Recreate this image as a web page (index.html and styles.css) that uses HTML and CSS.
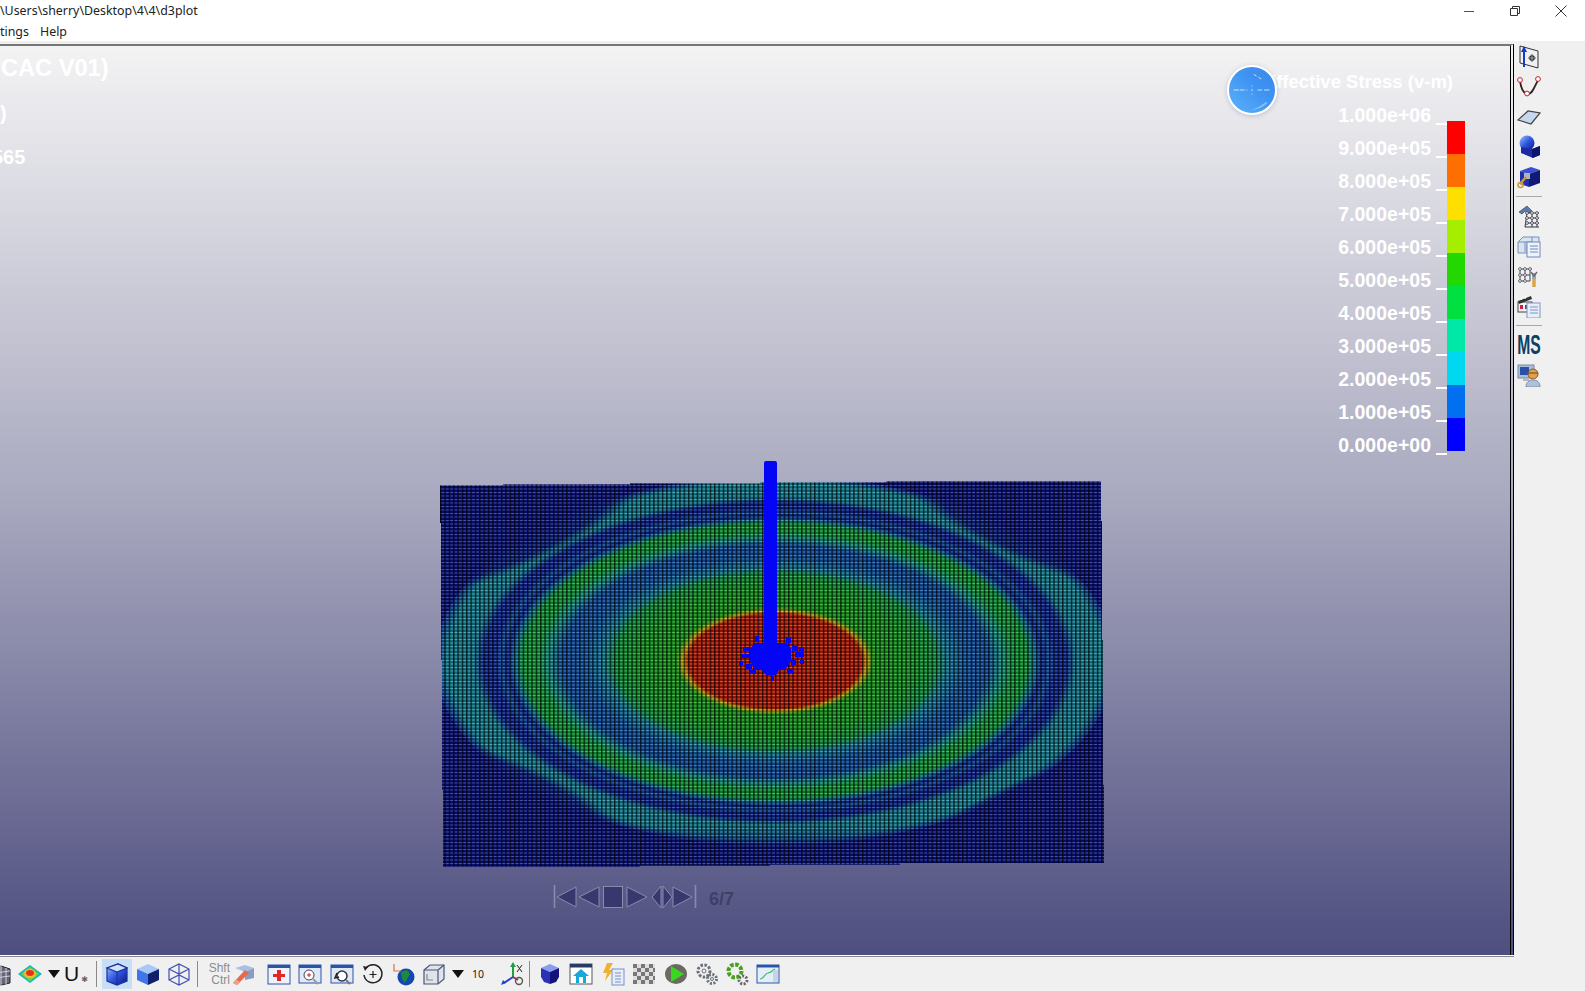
FILE: index.html
```html
<!DOCTYPE html>
<html lang="en">
<head>
<meta charset="utf-8">
<title>d3plot</title>
<link rel="stylesheet" href="styles.css">
</head>
<body>
<div class="window">
  <header class="titlebar">
    <span class="title-text">\Users\sherry\Desktop\4\4\d3plot</span>
    <div class="winbtns">
      <svg class="winbtn" viewBox="0 0 12 12"><path d="M1 6.500h10" stroke="#555" stroke-width="1"/></svg>
      <svg class="winbtn" viewBox="0 0 12 12"><path d="M1.500 3.500h7v7h-7zM3.500 3.500v-2h7v7h-2" fill="none" stroke="#333" stroke-width="1"/></svg>
      <svg class="winbtn" viewBox="0 0 12 12"><path d="M.5.5l11 11M11.500.5l-11 11" stroke="#333" stroke-width="1"/></svg>
    </div>
  </header>
  <nav class="menubar"><span class="menu-a">tings</span><span class="menu-b">Help</span></nav>
  <div class="workspace">
    <div class="leftcol">
      <main class="viewport">
        <svg class="stage" viewBox="0 46 1510 909" aria-hidden="true">
          <defs>
            <radialGradient id="fringe" gradientUnits="userSpaceOnUse" cx="0" cy="0" r="1" gradientTransform="translate(775 661) scale(340 185)">
              <stop offset="0" stop-color="#cc1a00"/>
              <stop offset=".255" stop-color="#cc1a00"/>
              <stop offset=".27" stop-color="#d8b000"/>
              <stop offset=".29" stop-color="#18a818"/>
              <stop offset=".40" stop-color="#10a820"/>
              <stop offset=".47" stop-color="#0ca040"/>
              <stop offset=".505" stop-color="#1088a8"/>
              <stop offset=".56" stop-color="#0a58b0"/>
              <stop offset=".625" stop-color="#0a50b0"/>
              <stop offset=".665" stop-color="#10a090"/>
              <stop offset=".70" stop-color="#0ca838"/>
              <stop offset=".74" stop-color="#0ca838"/>
              <stop offset=".765" stop-color="#0a78a8"/>
              <stop offset=".785" stop-color="#0824a4"/>
              <stop offset=".805" stop-color="#0a50a8"/>
              <stop offset=".825" stop-color="#0824a4"/>
              <stop offset=".855" stop-color="#0824a4"/>
              <stop offset=".885" stop-color="#1088a0"/>
              <stop offset=".965" stop-color="#1090a4"/>
              <stop offset="1" stop-color="#0a30a4"/>
              <stop offset="1.03" stop-color="#0a30a4"/>
              <stop offset="1.08" stop-color="#10809c"/>
              <stop offset="1.14" stop-color="#0e709c"/>
              <stop offset="1.22" stop-color="#061490"/>
              <stop offset="1.6" stop-color="#06108c"/>
            </radialGradient>
            <linearGradient id="bottomfade" x1="0" y1="0" x2="0" y2="1">
              <stop offset="0" stop-color="#06128e" stop-opacity="0"/>
              <stop offset=".6" stop-color="#06128e" stop-opacity="1"/>
              <stop offset="1" stop-color="#06128e" stop-opacity="1"/>
            </linearGradient>
            <radialGradient id="lobe">
              <stop offset="0" stop-color="#06128e" stop-opacity="1"/>
              <stop offset=".7" stop-color="#06128e" stop-opacity=".85"/>
              <stop offset="1" stop-color="#06128e" stop-opacity="0"/>
            </radialGradient>
            <pattern id="mesh" patternUnits="userSpaceOnUse" width="4.35" height="3.5" x="440" y="485">
              <rect x="0" y="0" width="4.35" height="1" fill="#fff" opacity=".28"/>
              <rect x="0" y="1" width="4.35" height="2.5" fill="#000" opacity=".28"/>
              <rect x="0" y="0" width="1.4" height="3.5" fill="#000" opacity=".75"/>
            </pattern>
            <clipPath id="plateclip">
              <path d="M440 485.500H503V484.500H630V483.500H760V482.500H886V481.500H1101V521H1102V640H1103V785H1104V863H900V864.500H770V865.500H640V866.500H443V790H442V660H441V523H440Z"/>
            </clipPath>
            <linearGradient id="bl" x1="0" y1="0" x2="1" y2="1">
              <stop offset="0" stop-color="#9cc4ff"/>
              <stop offset=".5" stop-color="#2f55e0"/>
              <stop offset="1" stop-color="#0a1680"/>
            </linearGradient>
          </defs>
          <g clip-path="url(#plateclip)">
            <rect x="436" y="478" width="672" height="392" fill="url(#fringe)"/>
            <ellipse cx="530" cy="535" rx="125" ry="26" transform="rotate(-26 530 535)" fill="url(#lobe)"/>
            <ellipse cx="1015" cy="530" rx="120" ry="26" transform="rotate(25 1015 530)" fill="url(#lobe)"/>
            <ellipse cx="520" cy="790" rx="120" ry="26" transform="rotate(25 520 790)" fill="url(#lobe)"/>
            <ellipse cx="1020" cy="805" rx="115" ry="24" transform="rotate(-25 1020 805)" fill="url(#lobe)"/>
            <rect x="436" y="826" width="672" height="44" fill="url(#bottomfade)"/>
            <rect x="436" y="478" width="672" height="392" fill="url(#mesh)"/>
          </g>
          <g fill="#0505f5">
            <rect x="764" y="461" width="13" height="190" rx="2"/>
            <path d="M755 643h32l4 6v12l-6 9h-6l-3 5h-10l-4-5h-7l-5-9v-12z"/>
            <path d="M743 647h6v4h-6zM741 654h8v4h-8zM746 664h6v5h-6zM750 670h6v4h-6zM755 636h4v6h-4zM786 637h5v6h-5zM792 646h5v5h-5zM795 652h9v5h-9zM791 660h5v5h-5zM799 647h5v4h-5zM787 669h6v4h-6zM771 676h3v5h-3zM739 661h4v4h-4zM800 660h4v4h-4z"/>
          </g>
        </svg>

        <div class="model-title">CAC V01)</div>
        <div class="model-line-a">)</div>
        <div class="model-line-b">565</div>

        <div class="legend-title">Effective Stress (v-m)</div>
        <div class="orb">
          <svg class="orb-marks" viewBox="0 0 50 50"><path d="M5 25h6M12 25h5M19 25h1M31 25h5M38 25h6M25 20v1M25 24v2M25 29v1M27 8l3 2M32 11l3 2" stroke="#fff" stroke-width="1" opacity=".8"/><path d="M24 47c6-1 13-3 18-8l-2-1c-5 4-10 7-16 9z" fill="#fff" opacity=".35"/></svg>
        </div>

        <div class="legend">
          <div class="legend-labels">
            <div class="legend-row"><span>1.000e+06</span><i class="tick"></i></div>
            <div class="legend-row"><span>9.000e+05</span><i class="tick"></i></div>
            <div class="legend-row"><span>8.000e+05</span><i class="tick"></i></div>
            <div class="legend-row"><span>7.000e+05</span><i class="tick"></i></div>
            <div class="legend-row"><span>6.000e+05</span><i class="tick"></i></div>
            <div class="legend-row"><span>5.000e+05</span><i class="tick"></i></div>
            <div class="legend-row"><span>4.000e+05</span><i class="tick"></i></div>
            <div class="legend-row"><span>3.000e+05</span><i class="tick"></i></div>
            <div class="legend-row"><span>2.000e+05</span><i class="tick"></i></div>
            <div class="legend-row"><span>1.000e+05</span><i class="tick"></i></div>
            <div class="legend-row"><span>0.000e+00</span><i class="tick"></i></div>
          </div>
          <div class="legend-bar">
            <i class="c1"></i><i class="c2"></i><i class="c3"></i><i class="c4"></i><i class="c5"></i><i class="c6"></i><i class="c7"></i><i class="c8"></i><i class="c9"></i><i class="c10"></i>
          </div>
        </div>

        <div class="player">
          <svg class="player-icons" viewBox="0 0 146 26" aria-hidden="true">
            <g fill="#38386f" stroke="#8a8aad" stroke-width="1">
              <path d="M1.500 1v23" fill="none" stroke-width="1.600"/>
              <path d="M4 13L23 3v20z"/>
              <path d="M26 13L46 3v20z"/>
              <rect x="50.500" y="2.500" width="19" height="21"/>
              <path d="M74 3l20 10-20 10z"/>
              <path d="M99 13l9-11v22z"/>
              <path d="M110 2l9 11-9 11z"/>
              <path d="M120 3l19 10-19 10z"/>
              <path d="M142.500 1v23" fill="none" stroke-width="1.600"/>
            </g>
          </svg>
          <span class="player-count">6/7</span>
        </div>
      </main>

      <div class="bottombar">
        <svg class="ic cut" viewBox="0 0 24 24"><path d="M8 4l9 3v14l-9 2-6-3V7z" fill="#667" stroke="#223"/><path d="M2 11l15-2M2 16l15-2M8 4v19M13 6v16" stroke="#cfd3da"/></svg>
        <svg class="ic g1" viewBox="0 0 24 24"><path d="M12 3l12 9-12 9L0 12z" fill="#18b8b8"/><path d="M12 5l9 7-9 7-9-7z" fill="#7ad040"/><ellipse cx="12" cy="11.500" rx="6" ry="4.500" fill="#f0c020"/><ellipse cx="12" cy="11" rx="4" ry="3" fill="#e83020"/></svg>
        <svg class="tri g6" viewBox="0 0 12 8"><path d="M0 0h12L6 8z" fill="#111"/></svg>
        <div class="u-btn g1">U<small>✱</small></div>
        <i class="vsep g11"></i>
        <div class="selected g5"><svg class="ic" viewBox="0 0 24 24"><path d="M2 6l11-4 9 4v13l-10 4-10-4z" fill="url(#bl)" stroke="#1a2f9a" stroke-width="1.200"/><path d="M2 6l10 4 10-4-9-4z" fill="#cfe0fa" stroke="#1a2f9a" stroke-width="1.200"/><path d="M12 10v13" stroke="#1a2f9a"/></svg></div>
        <svg class="ic g4" viewBox="0 0 24 24"><path d="M1 7l11-5 11 5-11 5z" fill="#a8c8f6"/><path d="M1 7l11 5v11L1 18z" fill="#3f75e8"/><path d="M12 12l11-5v11l-11 5z" fill="#10206a"/></svg>
        <svg class="ic g7" viewBox="0 0 24 24" fill="none" stroke="#3f4fb5" stroke-width="1.200"><path d="M2 7l10-5 10 5v11l-10 5-10-5zM2 7l10 5 10-5M12 12v11M12 2v11M2 18l10-5 10 5"/></svg>
        <i class="vsep g6"></i>
        <div class="shft g6"><span>Shft</span><span>Ctrl</span></div>
        <svg class="ic g2" viewBox="0 0 24 24"><path d="M3 6l10-3 9 3-9 4z" fill="#a8bfe8"/><path d="M13 10l9-4v10l-9 2z" fill="#8a9cc0"/><path d="M1 21l12-13 4 3-12 12z" fill="#e8684c"/><path d="M1 21l4 2 3-3-4-3z" fill="#f0a088"/></svg>
        <svg class="ic g11" viewBox="0 0 24 24"><rect x="1" y="3" width="22" height="19" fill="#eef3fb" stroke="#2a54a8"/><rect x="1" y="3" width="22" height="3" fill="#2a54a8"/><path d="M10 8h4v4h4v3h-4v4h-4v-4H6v-3h4z" fill="#e02828"/></svg>
        <svg class="ic g7" viewBox="0 0 24 24"><rect x="1" y="3" width="22" height="18" fill="#dfe8f5" stroke="#2a54a8"/><rect x="1" y="3" width="22" height="3" fill="#2a54a8"/><circle cx="11" cy="13" r="5" fill="#fff" stroke="#445"/><path d="M9 13h4M11 11v4" stroke="#d02020"/><path d="M15 17l5 5" stroke="#99a" stroke-width="2"/></svg>
        <svg class="ic g8" viewBox="0 0 24 24"><rect x="1" y="3" width="22" height="18" fill="#dfe8f5" stroke="#2a54a8"/><rect x="1" y="3" width="22" height="3" fill="#2a54a8"/><circle cx="12" cy="14" r="5" fill="#fff" stroke="#334" stroke-width="1.500"/><path d="M7 11l-2 5 4-1" fill="none" stroke="#222" stroke-width="1.500"/><path d="M16 18l4 4" stroke="#778" stroke-width="2"/></svg>
        <svg class="ic g6" viewBox="0 0 24 24"><path d="M6 6a9 9 0 1 1-2 7" fill="none" stroke="#222" stroke-width="1.500"/><path d="M3 4l5 1-3 4z" fill="#222"/><path d="M13 9v7M9.500 12.500h7" stroke="#222" stroke-width="1.200"/></svg>
        <svg class="ic g8" viewBox="0 0 24 24"><circle cx="14" cy="15" r="8.500" fill="#1248b0"/><path d="M9 10l6-2 3 4-3 5-2 4-3-4z" fill="#1c8a3a"/><path d="M2 2v7h7" fill="none" stroke="#d87050" stroke-width="1.200"/></svg>
        <svg class="ic g6" viewBox="0 0 24 24" fill="#dfe3ea" stroke="#4a5578" stroke-width="1.200"><path d="M2 8l6-5h14v14l-6 5H2z"/><path d="M2 8h14v14M16 8l6-5" fill="none"/><path d="M5 12v6h6" fill="none" stroke="#888"/></svg>
        <svg class="tri g6" viewBox="0 0 12 8"><path d="M0 0h12L6 8z" fill="#111"/></svg>
        <span class="num g4">10</span>
        <svg class="ic g13" viewBox="0 0 24 24"><path d="M12 15V3" stroke="#20a040" stroke-width="2"/><path d="M9 5l3-5 3 5z" fill="#20a040"/><path d="M12 15l-9 6" stroke="#2040d0" stroke-width="2"/><path d="M0 23l2-5 3 3z" fill="#2040d0"/><path d="M12 15l5 3" stroke="#d02020" stroke-width="2"/><circle cx="18" cy="19" r="3.500" fill="none" stroke="#555" stroke-width="1.400"/><path d="M16 3l5 7M21 3l-5 7" stroke="#222"/></svg>
        <i class="vsep g4"></i>
        <svg class="ic g8" viewBox="0 0 24 24"><path d="M3 6l9-4 9 4-9 4z" fill="#8a9cf0"/><path d="M3 6l9 4v12l-6-2-3-5z" fill="#2a30b8"/><path d="M12 10l9-4v9l-3 5-6 2z" fill="#12127a"/></svg>
        <svg class="ic g7" viewBox="0 0 24 24"><rect x="1" y="2" width="22" height="20" fill="#fff" stroke="#556"/><rect x="1" y="2" width="22" height="3.500" fill="#2a3a68"/><path d="M12 7l8 7h-3v7H7v-7H4z" fill="#18a8d8"/><rect x="10" y="15" width="4" height="6" fill="#fff"/></svg>
        <svg class="ic g8" viewBox="0 0 24 24"><path d="M6 1h6L8 8h4L4 19l2-8H2z" fill="#f0b030"/><rect x="11" y="7" width="12" height="16" fill="#e8eef8" stroke="#7a90c8"/><path d="M14 11h6M14 14h6M14 17h6M14 20h6" stroke="#7a90c8"/></svg>
        <svg class="ic g7" viewBox="0 0 24 24"><rect x="1" y="2" width="22" height="20" fill="#ddd"/><path d="M1 2h4v4H1zM9 2h4v4H9zM17 2h4v4h-4zM5 6h4v4H5zM13 6h4v4h-4zM21 6h2v4h-2zM1 10h4v4H1zM9 10h4v4H9zM17 10h4v4h-4zM5 14h4v4H5zM13 14h4v4h-4zM21 14h2v4h-2zM1 18h4v4H1zM9 18h4v4H9zM17 18h4v4h-4z" fill="#777"/></svg>
        <svg class="ic g8" viewBox="0 0 24 24"><ellipse cx="12" cy="12" rx="11" ry="10" fill="#6a6a60"/><path d="M7 4l13 8-13 8z" fill="#38d820"/></svg>
        <svg class="ic g7" viewBox="0 0 24 24" fill="none" stroke="#6a7078"><circle cx="9" cy="9" r="6" stroke-width="3" stroke-dasharray="2.500 1.500"/><circle cx="9" cy="9" r="2"/><circle cx="17" cy="17" r="4.500" stroke-width="3" stroke-dasharray="2 1.500"/><circle cx="17" cy="17" r="1.500"/></svg>
        <svg class="ic g6" viewBox="0 0 24 24" fill="none"><circle cx="10" cy="9" r="6.500" stroke="#4aa020" stroke-width="4" stroke-dasharray="3.500 1.500"/><circle cx="18" cy="18" r="4" stroke="#666" stroke-width="3" stroke-dasharray="2 1.500"/></svg>
        <svg class="ic g7" viewBox="0 0 24 24"><rect x="1" y="3" width="22" height="18" fill="#e4eef8" stroke="#2a54a8"/><rect x="1" y="3" width="22" height="2.500" fill="#2a54a8"/><path d="M4 17c4 0 5-6 8-6s3-2 7-4" fill="none" stroke="#38b868" stroke-width="1.200"/><rect x="17" y="8" width="5" height="12" fill="#c8d4e4"/></svg>
      </div>
    </div>

    <aside class="righttools">
      <svg class="ic" viewBox="0 0 24 24"><path d="M3 1l18 5v17L3 18z" fill="#eef0f4" stroke="#333"/><path d="M7 2v20" stroke="#1a3ac0" stroke-width="2"/><path d="M4 7l3-6 3 6z" fill="#1a3ac0"/><path d="M15 9l4 4-4 4-4-4z" fill="#333"/><path d="M15 9v8M11 13h8" stroke="#ddd" stroke-width=".6"/></svg>
      <svg class="ic" viewBox="0 0 24 24"><path d="M3 6c1 7 3 13 8 13s6-8 11-15" fill="none" stroke="#302020" stroke-width="1.800"/><circle cx="3" cy="5" r="2.400" fill="#fff" stroke="#c02030"/><circle cx="10" cy="18.500" r="2.400" fill="#fff" stroke="#c02030"/><circle cx="21" cy="4" r="2.400" fill="#fff" stroke="#c02030"/></svg>
      <svg class="ic" viewBox="0 0 24 24"><path d="M1 15L11 6l12 2-9 11z" fill="#c4d8f0" stroke="#444" stroke-width="1.200"/></svg>
      <svg class="ic" viewBox="0 0 24 24"><circle cx="10" cy="8" r="7.500" fill="url(#bl)"/><path d="M4 12l11 2 8-3v9l-7 3-12-5z" fill="#1c2aa8"/><path d="M15 14v9l8-3v-9z" fill="#0e146c"/></svg>
      <svg class="ic" viewBox="0 0 24 24"><path d="M3 6l11-4 9 3-11 4z" fill="#3a50d0"/><path d="M3 6l9 3v13l-9-3z" fill="#2030a8"/><path d="M12 9l11-4v13l-11 4z" fill="#101a78"/><rect x="7" y="8" width="6" height="6" fill="#b0b4b8"/><path d="M9 12l-6 7" stroke="#c89a38" stroke-width="2.500"/><circle cx="3.500" cy="20" r="2.500" fill="none" stroke="#c89a38" stroke-width="1.500"/></svg>
      <i class="hsep"></i>
      <svg class="ic" viewBox="0 0 24 24"><path d="M2 8l8-6 5 5-4 2-3-2-3 3z" fill="#5a7ab0" stroke="#333" stroke-width=".6"/><path d="M10 9h12M10 14h12M10 19h12M8 23h14M10 9l-2 14M15 9v14M20 9v14" stroke="#334" stroke-width="1"/><g fill="#fff" stroke="#334" stroke-width=".8"><circle cx="10" cy="9" r="1.400"/><circle cx="15" cy="9" r="1.400"/><circle cx="20" cy="9" r="1.400"/><circle cx="10" cy="14" r="1.400"/><circle cx="15" cy="14" r="1.400"/><circle cx="20" cy="14" r="1.400"/><circle cx="10" cy="19" r="1.400"/><circle cx="15" cy="19" r="1.400"/><circle cx="20" cy="19" r="1.400"/></g></svg>
      <svg class="ic" viewBox="0 0 24 24"><path d="M1 8l5-5h16v8H10v8H1z" fill="#d8e4f4" stroke="#7a8fb8"/><path d="M1 8h14M8 8v10M15 3v8" stroke="#7a8fb8"/><rect x="10" y="8" width="13" height="15" fill="#eef3fa" stroke="#6f88bc"/><path d="M13 12h8M13 15h8M13 18h8" stroke="#6f88bc"/></svg>
      <svg class="ic" viewBox="0 0 24 24"><path d="M3 5h12M3 11h10M3 17h10M3 5v12M8 5v12M13 5v12" stroke="#445" stroke-width="1"/><g fill="#fff" stroke="#445" stroke-width=".8"><circle cx="3" cy="5" r="1.400"/><circle cx="8" cy="5" r="1.400"/><circle cx="13" cy="5" r="1.400"/><circle cx="3" cy="11" r="1.400"/><circle cx="8" cy="11" r="1.400"/><circle cx="3" cy="17" r="1.400"/><circle cx="8" cy="17" r="1.400"/></g><path d="M17 9v6" stroke="#9aa" stroke-width="4"/><path d="M17 15v8" stroke="#d8a848" stroke-width="3.500"/><path d="M14 8l3 4 3-4" fill="none" stroke="#667" stroke-width="1.500"/></svg>
      <svg class="ic" viewBox="0 0 24 24"><rect x="1" y="8" width="14" height="10" fill="#f4f4f8" stroke="#444"/><path d="M1 7l13-5 1 3L2 10z" fill="#333"/><path d="M4 6l1-3M8 5l1-3" stroke="#fff"/><rect x="3" y="11" width="3" height="4" fill="#d02040"/><rect x="8" y="11" width="3" height="4" fill="#3050c0"/><rect x="10" y="9" width="13" height="15" fill="#e8eff8" stroke="#7f96c0"/><path d="M13 13h8M13 16h8M13 19h8" stroke="#7f96c0"/></svg>
      <i class="hsep"></i>
      <div class="ms">MS</div>
      <svg class="ic" viewBox="0 0 24 24"><rect x="1" y="2" width="16" height="13" fill="#a8bede" stroke="#7a8aa0"/><rect x="3" y="4" width="9" height="8" fill="#2a50a8"/><path d="M6 15h6v3H6z" fill="#b0b8c4"/><circle cx="16" cy="11" r="5" fill="#e0a050" stroke="#8a5a20"/><path d="M11 10h10" stroke="#6a4a20"/><path d="M9 24c0-5 3-7 7-7s7 2 7 7z" fill="#aec0da" stroke="#8090a8"/></svg>
    </aside>
  </div>
</div>
</body>
</html>
```

FILE: styles.css
```css
* { box-sizing: border-box; }
html, body { margin: 0; height: 100%; overflow: hidden; }
body { background: #f0f0f0; font-family: "Noto Sans", "Liberation Sans", sans-serif; color: #222; }

.window { display: flex; flex-direction: column; width: 1585px; height: 991px; overflow: hidden; }

.titlebar { display: flex; justify-content: space-between; align-items: center; height: 22px; background: #fff; flex: none; }
.title-text { font-size: 12.400px; line-height: 22px; }
.winbtns { display: flex; align-items: center; gap: 34px; padding-right: 18px; }
.winbtn { width: 12px; height: 12px; display: block; }

.menubar { height: 19px; background: #fff; font-size: 12.400px; line-height: 19px; flex: none; display: flex; }
.menu-a { width: 40px; }

.workspace { flex: 1; display: flex; min-height: 0; }
.leftcol { width: 1514px; flex: none; display: flex; flex-direction: column; padding-top: 3px; }

.viewport {
  position: relative; flex: none; height: 911px; overflow: hidden;
  border-top: 2px solid #777; border-right: 4px double #000;
  background: linear-gradient(to bottom, #f3f3f4 0%, #a8a8bf 50%, #4e4e80 100%);
}
.stage { position: absolute; left: 0; top: 0; width: 1510px; height: 909px; display: block; }

.model-title, .model-line-a, .model-line-b, .legend-title, .legend-labels, .player-count {
  font-family: "Liberation Sans", Arial, sans-serif; font-weight: 700;
}
.model-title, .model-line-a, .model-line-b, .legend-title { position: absolute; color: #fff; white-space: nowrap; }
.model-title { left: 1px; top: 8px; font-size: 23.600px; line-height: 28px; }
.model-line-a { left: 0; top: 55px; font-size: 20px; line-height: 24px; }
.model-line-b { left: -8px; top: 99px; font-size: 20px; line-height: 24px; }
.legend-title { right: 57px; top: 25px; font-size: 18.500px; line-height: 22px; }

.orb {
  position: absolute; left: 1227px; top: 19px; width: 50px; height: 50px; border-radius: 50%;
  border: 2px solid #fff; background: linear-gradient(45deg, #5cb2fc 0%, #3f93f2 60%, #3a88ee 100%);
  box-shadow: 0 1px 5px rgba(120, 130, 160, .4);
  overflow: hidden;
}
.orb-marks { width: 46px; height: 46px; display: block; }

.legend { position: absolute; right: 45px; top: 53px; display: flex; color: #fff; }
.legend-labels { display: flex; flex-direction: column; font-size: 19.500px; }
.legend-row { position: relative; height: 33px; width: 109px; display: flex; justify-content: flex-end; align-items: center; }
.legend-row span { line-height: 33px; margin-right: 16px; }
.tick { position: absolute; right: 0; bottom: 7px; width: 11px; height: 2px; background: #fff; }
.legend-bar { width: 18px; margin-top: 22px; display: flex; flex-direction: column; }
.legend-bar i { display: block; height: 33px; }
.c1 { background: #ff0000; }
.c2 { background: #ff6e00; }
.c3 { background: #ffdf00; }
.c4 { background: #a6ee00; }
.c5 { background: #22d800; }
.c6 { background: #00e040; }
.c7 { background: #00e8a8; }
.c8 { background: #00d8f0; }
.c9 { background: #0070f0; }
.c10 { background: #0000ff; }

.player { position: absolute; left: 553px; top: 838px; display: flex; align-items: center; gap: 10px; height: 26px; }
.player-icons { width: 146px; height: 26px; display: block; }
.player-count { font-size: 18px; color: #3f3f66; line-height: 26px; padding-top: 4px; }

.bottombar {
  flex: 1; display: flex; align-items: center; background: #f0f0f0;
  border-top: 1px solid #fff; box-shadow: inset 0 1px 0 #888;
  padding: 3px 0 2px; border-bottom: 1px solid #b8b8b8;
}
.ic { width: 24px; height: 24px; display: block; flex: none; }
.cut { margin-left: -7px; }
.tri { width: 12px; height: 8px; flex: none; }
.g1 { margin-left: 1px; }
.g2 { margin-left: 2px; }
.g4 { margin-left: 4px; }
.g5 { margin-left: 5px; }
.g6 { margin-left: 6px; }
.g7 { margin-left: 7px; }
.g8 { margin-left: 8px; }
.g11 { margin-left: 11px; }
.g13 { margin-left: 13px; }

.u-btn { width: 24px; font-family: "Liberation Sans", "DejaVu Sans", sans-serif; font-size: 21px; line-height: 24px; padding-left: 3px; color: #111; white-space: nowrap; display: flex; align-items: flex-start; }
.u-btn small { font-size: 8px; line-height: 8px; color: #666; margin: 14px 0 0 2px; }
.vsep { display: block; width: 1px; height: 26px; background: #8a8a8a; flex: none; }
.selected { width: 30px; height: 30px; flex: none; display: flex; align-items: center; justify-content: center; background: #c6def6; }
.shft { width: 26px; flex: none; display: flex; flex-direction: column; align-items: flex-end; font-family: "Liberation Sans", sans-serif; font-size: 12px; line-height: 12px; color: #8c8c8c; }
.num { width: 20px; flex: none; text-align: center; font-family: "Noto Sans", sans-serif; font-size: 10.500px; color: #222; }

.righttools { flex: none; width: 30px; margin-left: 0; display: flex; flex-direction: column; align-items: center; gap: 6px; padding-top: 4px; }
.hsep { display: block; width: 26px; height: 1px; background: #a8a8a8; margin: 1px 0; flex: none; }
.ms { width: 24px; height: 24px; flex: none; display: flex; justify-content: center; font-family: "Liberation Sans", sans-serif; font-weight: 700; font-size: 27px; line-height: 24px; color: #0c3f63; transform: scaleX(.58); white-space: nowrap; }
```
